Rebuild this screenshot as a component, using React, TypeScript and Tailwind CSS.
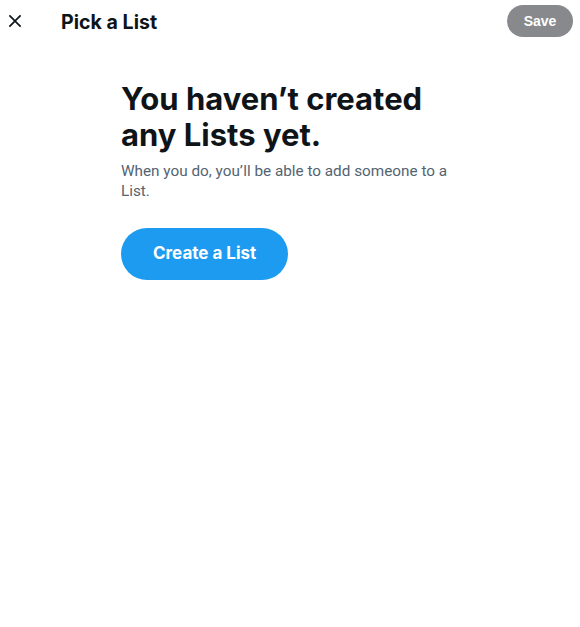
import React from "react";

export default function App() {
  return (
    <div className="w-[580px] h-[627px] bg-white" style={{ fontFamily: "Inter, 'Noto Sans', sans-serif" }}>
      <div className="flex items-center h-[42px] px-[4px]">
        <div className="w-[20px] h-[22px] flex items-center justify-center ml-[1px]">
          <svg viewBox="0 0 24 24" width="20" height="20" fill="#0f1419">
            <path d="M10.59 12L4.54 5.96l1.42-1.42L12 10.59l6.04-6.05 1.42 1.42L13.41 12l6.05 6.04-1.42 1.42L12 13.41l-6.04 6.05-1.42-1.42L10.59 12z" />
          </svg>
        </div>
        <div className="ml-[36px] mt-[1px] text-[19.6px] font-bold text-[#0f1419] leading-6">Pick a List</div>
        <div className="flex-1" />
        <button className="h-[32px] w-[66px] mr-[3px] rounded-full bg-[#87898c] text-white text-[14px] font-bold" style={{ fontFamily: "'Liberation Sans', Arial, sans-serif" }}>
          Save
        </button>
      </div>
      <div className="ml-[121px] w-[340px] mt-[39px]">
        <div className="text-[31px] leading-[36px] font-bold text-[#0f1419]">You haven’t created any Lists yet.</div>
        <div className="mt-[8px] text-[15.3px] leading-[20px] text-[#536471]" style={{ fontFamily: "Roboto, sans-serif" }}>
          When you do, you’ll be able to add someone to a List.
        </div>
        <button className="mt-[27px] h-[52px] px-[32px] rounded-full bg-[#1d9bf0] text-white text-[17px] font-bold">
          Create a List
        </button>
      </div>
    </div>
  );
}
